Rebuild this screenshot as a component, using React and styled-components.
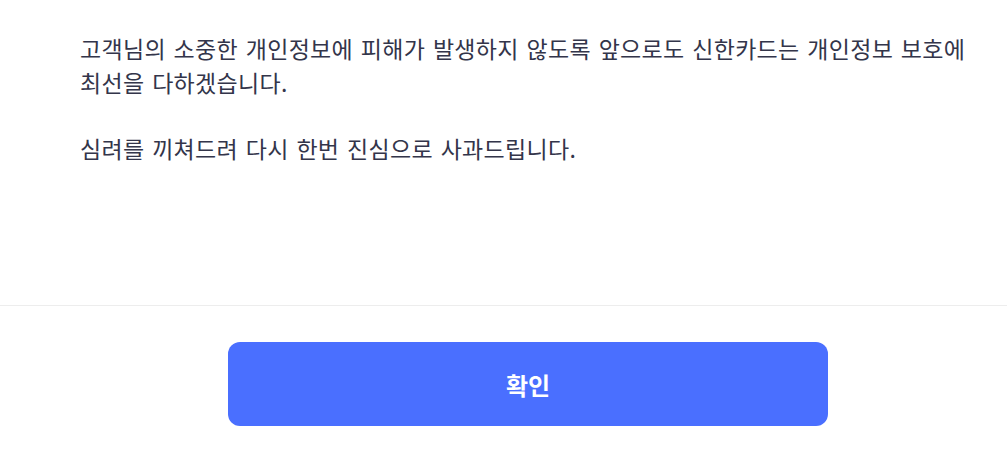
import React from "react";
import styled, { createGlobalStyle } from "styled-components";

const GlobalStyle = createGlobalStyle`
    html, body {
        margin: 0;
        padding: 0;
        background: #ffffff;
    }
    body {
        font-family: "Noto Sans CJK KR", "Noto Sans", sans-serif;
    }
`;

const Layout = styled.div`
    width: 1007px;
    height: 452px;
    display: flex;
    flex-direction: column;
    overflow: hidden;
`;
const Body = styled.div`
    height: 306px;
    flex-shrink: 0;
    box-sizing: border-box;
    padding: 32px 20px 0 80px;
    border-bottom: 1px solid #ededed;
`;
const Paragraph = styled.p`
    margin: 0 0 ${(p) => (p.$gap ? "33px" : "0")};
    font-size: 23px;
    line-height: 33.5px;
    color: #33354a;
    letter-spacing: 0.3px;
    word-spacing: 2.3px;
    white-space: nowrap;
`;
const Footer = styled.div`
    display: flex;
    justify-content: center;
    padding: 36px 0 0 49px;
`;
const ConfirmButton = styled.button`
    width: 600px;
    height: 84px;
    border: none;
    border-radius: 12px;
    background: #4a6fff;
    color: #ffffff;
    font-family: "Noto Sans CJK KR", "Noto Sans", sans-serif;
    font-size: 24px;
    font-weight: 700;
    cursor: pointer;
`;

const App = () => {
    return (
        <Layout>
            <GlobalStyle />
            <Body>
                <Paragraph $gap>
                    고객님의 소중한 개인정보에 피해가 발생하지 않도록 앞으로도 신한카드는 개인정보 보호에
                    <br />
                    최선을 다하겠습니다.
                </Paragraph>
                <Paragraph>심려를 끼쳐드려 다시 한번 진심으로 사과드립니다.</Paragraph>
            </Body>
            <Footer>
                <ConfirmButton type="button">확인</ConfirmButton>
            </Footer>
        </Layout>
    );
};
export default App;
